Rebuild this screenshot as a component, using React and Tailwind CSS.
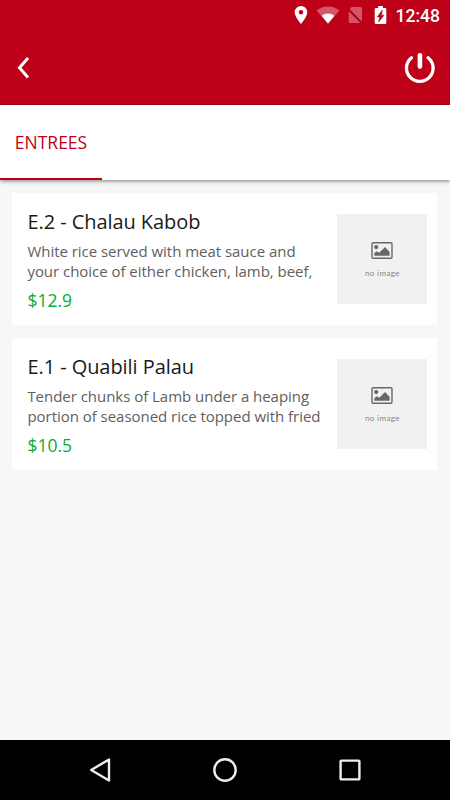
const items = [
  {
    name: 'E.2 - Chalau Kabob',
    lines: ['White rice served with meat sauce and', 'your choice of either chicken, lamb, beef,'],
    price: '$12.9',
  },
  {
    name: 'E.1 - Quabili Palau',
    lines: ['Tender chunks of Lamb under a heaping', 'portion of seasoned rice topped with fried'],
    price: '$10.5',
  },
];

function StatusBar() {
  return (
    <div className="flex h-[30px] items-center justify-end pr-[10px] text-white">
      <svg className="h-[30px] w-[102px]" viewBox="290 0 102 30" fill="currentColor">
        <path fillRule="evenodd" d="M301 6a6.3 6.3 0 0 0-6.3 6.3C294.700 17 301 24 301 24s6.300-7 6.300-11.700A6.300 6.300 0 0 0 301 6Zm0 4.100a2.250 2.250 0 1 1 0 4.500a2.250 2.250 0 0 1 0-4.500Z" />
        <path opacity=".35" d="M316.700 10.400a18.500 18.500 0 0 1 22.600 0L328 24Z" />
        <path d="M321.600 15.700a10.500 10.500 0 0 1 12.800 0L328 23.600Z" />
        <path opacity=".33" d="M351.500 7h9q1.500 0 1.500 1.500v13.500L349.600 9.200ZM348.700 11.200 360.500 23h-10.300q-1.500 0-1.500-1.500Z" />
        <path d="M347.500 8.200 362.300 23" stroke="#8a1522" strokeWidth="1.300" />
        <path d="M378.200 6h4.700v2h2.100q1.300 0 1.300 1.300v13.400q0 1.300-1.300 1.300h-9q-1.300 0-1.300-1.300V9.300q0-1.300 1.300-1.300h2.200Z" />
        <path d="m382.300 10-5 6.900h2.600l-1.200 5 5.300-6.700h-2.600Z" fill="#be0018" stroke="#be0018" strokeWidth=".6" />
      </svg>
      <span className="w-[48px] pt-px pl-[3.500px] font-['Roboto'] text-[17.500px] leading-[30px] font-medium whitespace-nowrap">12:48</span>
    </div>
  );
}

function NoImage() {
  return (
    <div className="flex h-[90px] w-[90px] shrink-0 flex-col items-center bg-[#f1f1f1] pt-[28px] text-[#686868]">
      <svg className="h-[17px] w-[22px]" viewBox="0 0 22 17" fill="currentColor">
        <rect x="1" y=".8" width="20" height="15.400" rx="1.200" fill="none" stroke="currentColor" strokeWidth="1.400" />
        <circle cx="5.200" cy="5.100" r="2.100" />
        <path d="M3.300 13.800v-2.500l2.400-2 2.500 1.500 5.900-5.900 4.500 5.200v3.700Z" />
      </svg>
      <span className="mt-[8px] font-['Lato'] text-[8px] leading-[12px] tracking-[0.400px] text-[#858585]">no image</span>
    </div>
  );
}

function MenuCard({ item }) {
  return (
    <article className="flex h-[132.500px] bg-white pt-[21.500px] pr-[10px] pl-[15px]">
      <div className="min-w-0 flex-1 -mt-[6px] whitespace-nowrap">
        <h2 className="text-[20px] leading-[28px] tracking-[-0.060px] text-[#1a1a1a]">{item.name}</h2>
        <p className="mt-[4.500px] text-[15px] leading-[20.500px] tracking-[-0.030px] text-[#606060]">
          {item.lines[0]}
          <br />
          {item.lines[1]}
        </p>
        <p className="mt-[6.500px] text-[17.500px] leading-[24px] text-[#08ab33]">{item.price}</p>
      </div>
      <NoImage />
    </article>
  );
}

export default function App() {
  return (
    <div className="flex h-[800px] w-[450px] flex-col overflow-hidden bg-[#f7f7f7] font-['Open_Sans',sans-serif]">
      <header className="h-[105px] shrink-0 bg-[#be0018]">
        <StatusBar />
        <div className="flex h-[75px] items-center justify-between pr-[14px] pl-[17px] text-white">
          <button aria-label="Back">
            <svg className="h-[24px] w-[13px]" viewBox="0 0 13 24" fill="none" stroke="currentColor" strokeWidth="3">
              <path d="m11 2-8.500 9.800L11 21.500" />
            </svg>
          </button>
          <button aria-label="Power">
            <svg className="h-[32px] w-[32px]" viewBox="404 51.500 32 32" fill="none" stroke="currentColor" strokeLinecap="round">
              <path d="M411.500 57.200a13.300 13.300 0 1 0 16.600 0" strokeWidth="3.300" />
              <path d="M419.900 54.800v11.300" strokeWidth="4.600" />
            </svg>
          </button>
        </div>
      </header>
      <nav className="h-[75px] shrink-0 bg-white shadow-[0_1px_4px_rgba(0,0,0,0.500)]">
        <div className="flex h-full w-[102px] items-center justify-center border-b-[2px] border-[#be0010] pt-[2px] text-[17.500px] text-[#be0018]">
          ENTREES
        </div>
      </nav>
      <main className="flex flex-1 flex-col gap-[12.500px] pr-[12.600px] pl-[12.400px] pt-[12.500px]">
        {items.map((item) => (
          <MenuCard key={item.name} item={item} />
        ))}
      </main>
      <footer className="h-[60px] shrink-0 bg-black">
        <svg className="h-[60px] w-[450px]" viewBox="0 740 450 60" fill="none" stroke="#eeeeee" strokeWidth="2.400" strokeLinejoin="round">
          <path d="M109 759.500v21L91.200 770Z" />
          <circle cx="225" cy="770" r="10.700" />
          <rect x="340.600" y="760.600" width="18.800" height="18.800" rx=".7" />
        </svg>
      </footer>
    </div>
  );
}
